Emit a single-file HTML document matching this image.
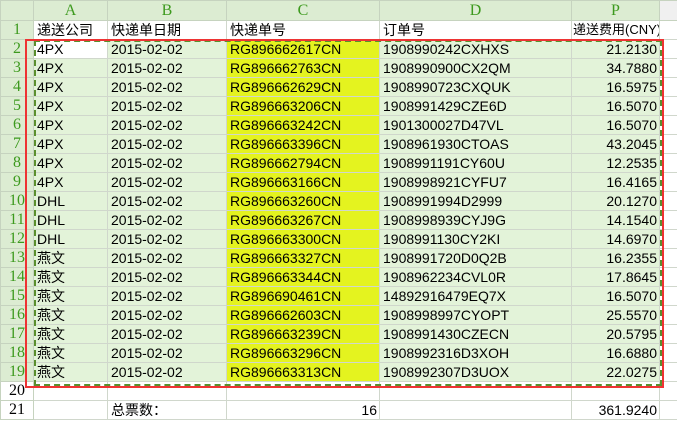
<!DOCTYPE html><html><head><meta charset="utf-8"><style>
body{margin:0;width:677px;height:422px;overflow:hidden;background:#fff;font-family:"Liberation Sans","Noto Sans CJK SC",sans-serif;font-size:14px;}
table{border-collapse:collapse;table-layout:fixed;position:absolute;left:0;top:0;width:677px}
td{border:1px solid #d0d7cc;height:18px;padding:0;text-indent:3px;white-space:nowrap;overflow:hidden;line-height:18px;color:#000}
tr.h td{height:19px;background:#dcecd2;color:#3d9a1e;font-family:"Liberation Serif",serif;font-size:16px;text-align:center;text-indent:0;border-color:#c6d3bf}
td.n{background:#dcecd2;color:#3d9a1e;font-family:"Liberation Serif",serif;font-size:16px;text-align:center;text-indent:0;border-color:#c6d3bf}
tr.d td{background:#e3f3d9}
tr.d td.y{background:#e4f31f}
tr.d td.n{background:#dcecd2}
td.r{text-align:right;text-indent:0}
td.r span{margin-right:2px}
td.w{background:#fff!important}
td.g{background:#f4f4f4;border-color:#e0e0e0}
tr.h td.g{background:#f0f0f0}
</style></head><body>
<table>
<colgroup><col style="width:33px"><col style="width:74px"><col style="width:119px"><col style="width:153px"><col style="width:192px"><col style="width:88px"><col style="width:18px"></colgroup>
<tr class="h"><td></td><td>A</td><td>B</td><td>C</td><td>D</td><td>P</td><td class="g"></td></tr>
<tr><td class="n">1</td><td>递送公司</td><td>快递单日期</td><td>快递单号</td><td>订单号</td><td style="text-indent:1px;font-size:13px">递送费用(CNY)</td><td></td></tr>
<tr class="d"><td class="n">2</td><td class="w">4PX</td><td>2015-02-02</td><td class="y">RG896662617CN</td><td>1908990242CXHXS</td><td class="r"><span>21.2130</span></td><td class="w"></td></tr>
<tr class="d"><td class="n">3</td><td>4PX</td><td>2015-02-02</td><td class="y">RG896662763CN</td><td>1908990900CX2QM</td><td class="r"><span>34.7880</span></td><td class="w"></td></tr>
<tr class="d"><td class="n">4</td><td>4PX</td><td>2015-02-02</td><td class="y">RG896662629CN</td><td>1908990723CXQUK</td><td class="r"><span>16.5975</span></td><td class="w"></td></tr>
<tr class="d"><td class="n">5</td><td>4PX</td><td>2015-02-02</td><td class="y">RG896663206CN</td><td>1908991429CZE6D</td><td class="r"><span>16.5070</span></td><td class="w"></td></tr>
<tr class="d"><td class="n">6</td><td>4PX</td><td>2015-02-02</td><td class="y">RG896663242CN</td><td>1901300027D47VL</td><td class="r"><span>16.5070</span></td><td class="w"></td></tr>
<tr class="d"><td class="n">7</td><td>4PX</td><td>2015-02-02</td><td class="y">RG896663396CN</td><td>1908961930CTOAS</td><td class="r"><span>43.2045</span></td><td class="w"></td></tr>
<tr class="d"><td class="n">8</td><td>4PX</td><td>2015-02-02</td><td class="y">RG896662794CN</td><td>1908991191CY60U</td><td class="r"><span>12.2535</span></td><td class="w"></td></tr>
<tr class="d"><td class="n">9</td><td>4PX</td><td>2015-02-02</td><td class="y">RG896663166CN</td><td>1908998921CYFU7</td><td class="r"><span>16.4165</span></td><td class="w"></td></tr>
<tr class="d"><td class="n">10</td><td>DHL</td><td>2015-02-02</td><td class="y">RG896663260CN</td><td>1908991994D2999</td><td class="r"><span>20.1270</span></td><td class="w"></td></tr>
<tr class="d"><td class="n">11</td><td>DHL</td><td>2015-02-02</td><td class="y">RG896663267CN</td><td>1908998939CYJ9G</td><td class="r"><span>14.1540</span></td><td class="w"></td></tr>
<tr class="d"><td class="n">12</td><td>DHL</td><td>2015-02-02</td><td class="y">RG896663300CN</td><td>1908991130CY2KI</td><td class="r"><span>14.6970</span></td><td class="w"></td></tr>
<tr class="d"><td class="n">13</td><td>燕文</td><td>2015-02-02</td><td class="y">RG896663327CN</td><td>1908991720D0Q2B</td><td class="r"><span>16.2355</span></td><td class="w"></td></tr>
<tr class="d"><td class="n">14</td><td>燕文</td><td>2015-02-02</td><td class="y">RG896663344CN</td><td>1908962234CVL0R</td><td class="r"><span>17.8645</span></td><td class="w"></td></tr>
<tr class="d"><td class="n">15</td><td>燕文</td><td>2015-02-02</td><td class="y">RG896690461CN</td><td>14892916479EQ7X</td><td class="r"><span>16.5070</span></td><td class="w"></td></tr>
<tr class="d"><td class="n">16</td><td>燕文</td><td>2015-02-02</td><td class="y">RG896662603CN</td><td>1908998997CYOPT</td><td class="r"><span>25.5570</span></td><td class="w"></td></tr>
<tr class="d"><td class="n">17</td><td>燕文</td><td>2015-02-02</td><td class="y">RG896663239CN</td><td>1908991430CZECN</td><td class="r"><span>20.5795</span></td><td class="w"></td></tr>
<tr class="d"><td class="n">18</td><td>燕文</td><td>2015-02-02</td><td class="y">RG896663296CN</td><td>1908992316D3XOH</td><td class="r"><span>16.6880</span></td><td class="w"></td></tr>
<tr class="d"><td class="n">19</td><td>燕文</td><td>2015-02-02</td><td class="y">RG896663313CN</td><td>1908992307D3UOX</td><td class="r"><span>22.0275</span></td><td class="w"></td></tr>
<tr><td class="n" style="background:#fff;color:#000">20</td><td></td><td></td><td></td><td></td><td></td><td></td></tr>
<tr><td class="n" style="background:#fff;color:#000">21</td><td></td><td>总票数：</td><td class="r"><span>16</span></td><td></td><td class="r"><span>361.9240</span></td><td></td></tr>
</table>
<div style="position:absolute;left:34px;top:40px;width:624px;height:342px;border:2px dashed #5a8f2e;"></div>
<div style="position:absolute;left:25px;top:39px;width:635px;height:345px;border:2px solid #ee3333;"></div>
</body></html>
